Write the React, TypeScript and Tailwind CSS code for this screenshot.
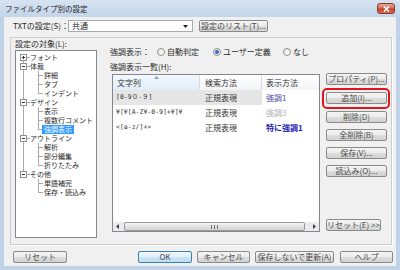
import React from "react";

type BtnProps = { children: React.ReactNode; className?: string; def?: boolean };

function Btn({ children, className = "", def = false }: BtnProps) {
  return (
    <div
      className={`h-[12px] shrink-0 flex items-center justify-center rounded-[2px] border text-[8px] leading-none text-[#4a4a4a] whitespace-nowrap ${
        def
          ? "border-[#3c7fb1] bg-[linear-gradient(#eef7fd,#e0f0fb_50%,#cde6f7_50%,#bcdcf3)]"
          : "border-[#8a8a8a] bg-[linear-gradient(#f4f4f4,#ececec_50%,#dedede_50%,#d2d2d2)]"
      } ${className}`}
    >
      {children}
    </div>
  );
}

function Radio({ on = false }: { on?: boolean }) {
  return (
    <div className="w-[8px] h-[8px] shrink-0 rounded-full border border-[#8e8f8f] bg-[linear-gradient(135deg,#e6e6e6,#ffffff)] flex items-center justify-center">
      {on && <div className="w-[4px] h-[4px] rounded-full bg-[#2a6fb8]" />}
    </div>
  );
}

type Node = {
  t: string;
  root?: boolean;
  exp?: "+" | "-";
  first?: boolean;
  lastRoot?: boolean;
  last?: boolean;
  underLast?: boolean;
  sel?: boolean;
};

const tree: Node[] = [
  { t: "フォント", root: true, exp: "+", first: true },
  { t: "体裁", root: true, exp: "-" },
  { t: "詳細" },
  { t: "タブ" },
  { t: "インデント", last: true },
  { t: "デザイン", root: true, exp: "-" },
  { t: "表示" },
  { t: "複数行コメント" },
  { t: "強調表示", last: true, sel: true },
  { t: "アウトライン", root: true, exp: "-" },
  { t: "解析" },
  { t: "部分編集" },
  { t: "折りたたみ", last: true },
  { t: "その他", root: true, exp: "-", lastRoot: true },
  { t: "単語補完", underLast: true },
  { t: "保存・読込み", last: true, underLast: true },
];

const LC = "#a9a9a9";

function TreeRow({ n }: { n: Node }) {
  if (n.root) {
    return (
      <div className="h-[9px] flex items-center">
        <svg width="14" height="9" className="shrink-0">
          <line x1="7.5" y1={n.first ? 4.5 : 0} x2="7.5" y2={n.lastRoot ? 4.5 : 9} stroke={LC} />
          <line x1="11" y1="4.5" x2="14" y2="4.5" stroke={LC} />
          <rect x="4.5" y="1.5" width="6" height="6" fill="#fff" stroke="#8f8f8f" />
          <line x1="6" y1="4.5" x2="9" y2="4.5" stroke="#333" />
          {n.exp === "+" && <line x1="7.5" y1="3" x2="7.5" y2="6" stroke="#333" />}
        </svg>
        <span className="text-[7px] leading-[9px] h-[9px] text-[#2a2a2a] whitespace-nowrap">{n.t}</span>
      </div>
    );
  }
  return (
    <div className="h-[9px] flex items-center">
      <svg width="28" height="9" className="shrink-0">
        {!n.underLast && <line x1="7.5" y1="0" x2="7.5" y2="9" stroke={LC} />}
        <line x1="22.5" y1="0" x2="22.5" y2={n.last ? 5 : 9} stroke={LC} />
        <line x1="22.5" y1="4.5" x2="27" y2="4.5" stroke={LC} />
      </svg>
      <span
        className={`text-[7px] leading-[9px] h-[9px] whitespace-nowrap ${
          n.sel ? "bg-[#3399ff] text-white px-[2px] -ml-[2px]" : "text-[#2a2a2a]"
        }`}
      >
        {n.t}
      </span>
    </div>
  );
}

function ListRow({
  a,
  b,
  c,
  cCls,
  sel = false,
}: {
  a: string;
  b: string;
  c: string;
  cCls: string;
  sel?: boolean;
}) {
  return (
    <div className="h-[15px] flex items-center">
      <div
        className={`w-[87px] h-full flex items-center pl-[3px] text-[6.5px] leading-none text-[#333] whitespace-nowrap font-['DejaVu_Sans_Mono','Noto_Sans_CJK_JP',monospace] ${
          sel ? "bg-[#e6e6e6]" : ""
        }`}
      >
        {a}
      </div>
      <div
        className={`w-[62px] h-full flex items-center pl-[5px] text-[8px] leading-none text-[#333] whitespace-nowrap ${
          sel ? "bg-[#e6e6e6]" : ""
        }`}
      >
        {b}
      </div>
      <div className={`flex-1 h-full flex items-center pl-[4px] text-[8px] leading-none whitespace-nowrap ${cCls}`}>
        {c}
      </div>
    </div>
  );
}

export default function App() {
  return (
    <div className="w-[400px] h-[270px] flex flex-col bg-[#bfd2e8] font-['Noto_Sans_CJK_JP',sans-serif] text-[#2a2a2a] overflow-hidden">
      {/* Title bar */}
      <div className="h-[17px] shrink-0 flex items-center pl-[5px] pr-[5px] bg-[linear-gradient(#d6e3f1,#c3d5ea)]">
        <span className="text-[7.5px] leading-none text-[#1b1b1b] whitespace-nowrap">ファイルタイプ別の設定</span>
        <div className="ml-auto w-[18px] h-[11px] rounded-[3px] border border-[#8b3b30] bg-[linear-gradient(#e9a797,#d4705a_45%,#c2402c_55%,#d66a4f)] flex items-center justify-center">
          <svg width="7" height="6" viewBox="0 0 7 6">
            <path d="M1 0.5 L6 5.5 M6 0.5 L1 5.5" stroke="#fff" strokeWidth="1.6" />
          </svg>
        </div>
      </div>

      {/* Body */}
      <div className="flex-1 mx-[4px] mb-[4px] bg-[#f0f0f0] flex flex-col">
        {/* Row 1 */}
        <div className="mt-[3px] h-[12px] flex items-center pl-[9px]">
          <span className="w-[55px] shrink-0 text-[8px] leading-none whitespace-nowrap">TXTの設定(S)：</span>
          <div className="w-[125px] h-[12px] shrink-0 border border-[#a5acb5] bg-white flex items-center pl-[3px]">
            <span className="text-[8px] leading-none">共通</span>
            <svg width="5" height="3" className="ml-auto mr-[4px]">
              <path d="M0 0 L5 0 L2.5 3 Z" fill="#222" />
            </svg>
          </div>
          <Btn className="ml-[6px] w-[69px]">設定のリスト(T)...</Btn>
        </div>

        {/* Panel */}
        <div className="mt-[5px] ml-[6px] w-[382px] h-[208px] border border-[#cdcdcd] shadow-[1px_1px_0_#ffffff] flex">
          {/* Left column */}
          <div className="ml-[4px] w-[82px] flex flex-col">
            <div className="mt-[1px] h-[10px] flex items-center text-[8px] leading-none whitespace-nowrap">設定の対象(L):</div>
            <div className="mt-[1px] h-[188px] border border-[#828790] bg-white pt-[2px]">
              {tree.map((n, i) => (
                <TreeRow key={i} n={n} />
              ))}
            </div>
          </div>

          {/* Middle column */}
          <div className="ml-[13px] w-[210px] flex flex-col">
            <div className="mt-[9px] h-[10px] flex items-center text-[8px] leading-none whitespace-nowrap">
              <span className="w-[47px] shrink-0">強調表示：</span>
              <div className="w-[56px] flex items-center">
                <Radio />
                <span className="ml-[2px]">自動判定</span>
              </div>
              <div className="w-[70px] flex items-center">
                <Radio on />
                <span className="ml-[2px]">ユーザー定義</span>
              </div>
              <div className="flex items-center">
                <Radio />
                <span className="ml-[2px]">なし</span>
              </div>
            </div>
            <div className="mt-[5px] h-[10px] flex items-center text-[8px] leading-none whitespace-nowrap">強調表示一覧(H):</div>
            <div className="mt-[2px] ml-[2px] w-[208px] h-[158px] border border-[#828790] bg-white flex flex-col">
              {/* header */}
              <div className="h-[15px] flex text-[8px] leading-none text-[#333]">
                <div className="relative w-[87px] flex items-center pl-[4px] border-r border-[#dcdcdc] bg-[linear-gradient(#f2f8fc,#e1eef9)]">
                  文字列
                  <svg width="5" height="3" className="absolute left-[41px] top-[1px]">
                    <path d="M0 3 L2.5 0 L5 3 Z" fill="#8aa0b8" />
                  </svg>
                </div>
                <div className="w-[62px] flex items-center pl-[5px] border-r border-[#dcdcdc] bg-[linear-gradient(#ffffff,#f3f4f6)]">
                  検索方法
                </div>
                <div className="flex-1 flex items-center pl-[4px] bg-[linear-gradient(#ffffff,#f3f4f6)]">表示方法</div>
              </div>
              <ListRow a="[0-9０-９]" b="正規表現" c="強調1" cCls="text-[#4a4aa0]" sel />
              <ListRow a="¥[¥[A-Z¥-0-9]+¥]¥" b="正規表現" c="強調3" cCls="text-[#b0b0b0]" />
              <ListRow a="<[a-z/]+>" b="正規表現" c="特に強調1" cCls="text-[#1c1cb0] font-bold" />
              <div className="flex-1" />
              {/* scrollbar */}
              <div className="h-[9px] flex bg-[#ebebeb]">
                <div className="w-[9px] flex items-center justify-center">
                  <svg width="3" height="5">
                    <path d="M3 0 L0 2.5 L3 5 Z" fill="#444" />
                  </svg>
                </div>
                <div className="ml-[2px] w-[181px] rounded-[2px] border border-[#9a9a9a] bg-[linear-gradient(#f5f5f5,#e2e2e2_50%,#d4d4d4)] flex items-center justify-center">
                  <svg width="7" height="4">
                    <path d="M0.5 0 V4 M3.5 0 V4 M6.5 0 V4" stroke="#6f6f6f" />
                  </svg>
                </div>
                <div className="flex-1" />
                <div className="w-[9px] flex items-center justify-center">
                  <svg width="3" height="5">
                    <path d="M0 0 L3 2.5 L0 5 Z" fill="#444" />
                  </svg>
                </div>
              </div>
            </div>
          </div>

          {/* Right column */}
          <div className="ml-[6px] w-[61px] flex flex-col">
            <Btn className="mt-[35px]">プロパティ(P)...</Btn>
            <div className="relative mt-[7px]">
              <Btn>追加(I)...</Btn>
              <div className="absolute -left-[4px] -right-[3px] -top-[4px] -bottom-[5px] border-2 border-[#e0141e] rounded-[5px]" />
            </div>
            <Btn className="mt-[7px]">削除(D)</Btn>
            <Btn className="mt-[6px]">全削除(B)</Btn>
            <Btn className="mt-[6px]">保存(V)...</Btn>
            <Btn className="mt-[6px]">読込み(O)...</Btn>
            <Btn className="mt-[42px] w-[55px]">リセット(E) &gt;&gt;</Btn>
          </div>
        </div>

        {/* Bottom row */}
        <div className="mt-[6px] h-[12px] flex pl-[9px]">
          <Btn className="w-[54px]">リセット</Btn>
          <Btn def className="ml-[71px] w-[54px]">OK</Btn>
          <Btn className="ml-[5px] w-[53px]">キャンセル</Btn>
          <Btn className="ml-[5px] w-[79px]">保存しないで更新(A)</Btn>
          <Btn className="ml-[6px] w-[53px]">ヘルプ</Btn>
        </div>
      </div>
    </div>
  );
}
